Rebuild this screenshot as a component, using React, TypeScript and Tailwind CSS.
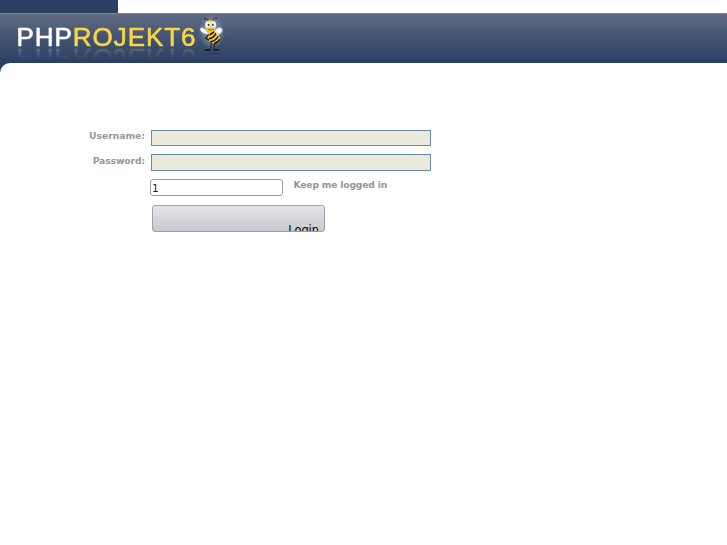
import React from "react";

const Bee = () => (
  <svg
    width="27"
    height="40"
    viewBox="0 0 30 38"
    preserveAspectRatio="none"
    className="-ml-[3px] mt-px shrink-0"
    aria-hidden="true"
  >
    <defs>
      <radialGradient id="glow">
        <stop offset="0.4" stopColor="#c5d0e0" stopOpacity="0.4" />
        <stop offset="1" stopColor="#c5d0e0" stopOpacity="0" />
      </radialGradient>
    </defs>
    <ellipse cx="15" cy="16" rx="15" ry="17" fill="url(#glow)" />
    {/* antennae */}
    <path
      d="M12 7Q11 2.5 7.5 3.5M16 7Q17 1.5 20.5 3"
      fill="none"
      stroke="#303641"
      strokeWidth="0.9"
    />
    <circle cx="7.5" cy="3.7" r="0.9" fill="#303641" />
    <circle cx="20.5" cy="3.2" r="0.9" fill="#303641" />
    {/* legs */}
    <path
      d="M15 26L14 33L9 33.5M18 26L18 33.2L22 33.2"
      fill="none"
      stroke="#20242c"
      strokeWidth="1.2"
    />
    <path
      d="M8 33.3h5M18 33h5"
      stroke="#181c24"
      strokeWidth="1.6"
      strokeLinecap="round"
    />
    {/* wings */}
    <path
      d="M12 18C7 18.5 2 16 2.5 13C3.5 10.5 9 13 12 18Z"
      fill="#f7f8fb"
      stroke="#b8c2d0"
      strokeWidth="0.5"
    />
    <path
      d="M18 18C18 13 24.5 10.5 26.8 13.5C28 17.5 22 19.5 18 18Z"
      fill="#f7f8fb"
      stroke="#b8c2d0"
      strokeWidth="0.5"
    />
    {/* body */}
    <path
      d="M11 16Q18 13 22.5 18Q26.5 24 22 27Q13 28 11 23Z"
      fill="#f4cd38"
    />
    <path
      d="M13 19L18 16M12 22.5Q17 22 20 17.5M13.5 25.5Q20 24.5 22.5 20M18 27Q22.5 26 24.2 23"
      fill="none"
      stroke="#181a1c"
      strokeWidth="1.6"
    />
    <path
      d="M12 18.5L8.5 22L12.5 24"
      fill="none"
      stroke="#22262c"
      strokeWidth="1.3"
    />
    {/* head */}
    <ellipse cx="14" cy="10.5" rx="6.2" ry="5.7" fill="#f2cb3b" />
    <ellipse cx="11" cy="9" rx="3" ry="3" fill="#eaf2fa" />
    <ellipse cx="17" cy="9" rx="3" ry="3" fill="#eaf2fa" />
    <circle cx="11.8" cy="9.4" r="1" fill="#26384f" />
    <circle cx="16.4" cy="9.4" r="1" fill="#26384f" />
    <path
      d="M10.8 13.3Q14 15.8 17.3 13.3"
      fill="none"
      stroke="#50401b"
      strokeWidth="0.8"
    />
    <path d="M10 36.5h11" stroke="#243653" strokeWidth="0.8" />
  </svg>
);

const labelStyle = "text-[9.2px] leading-3 font-bold text-[#969696]";

export default function App() {
  const [username, setUsername] = React.useState("");
  const [password, setPassword] = React.useState("");
  const [keep, setKeep] = React.useState("1");
  return (
    <div className="h-[545px] w-[727px] overflow-hidden bg-white font-['DejaVu_Sans',sans-serif]">
      <div className="h-[13px] w-[118px] bg-[#2b4063]" />
      <header className="flex h-[50px] items-start border-t border-[#79869a] bg-linear-to-b from-[#606b82] via-[#425472] via-50% to-[#293f65] pl-[16.5px]">
        <h1 className="mt-[8px] h-[30px] w-[184px] font-['Liberation_Sans',Arial,sans-serif] text-[26px] leading-[30px] tracking-[0.95px] whitespace-nowrap text-[#f9d544] [-webkit-box-reflect:below_-9px_linear-gradient(transparent_45%,rgba(0,0,0,0.3))] [-webkit-text-stroke:0.6px]">
          <span className="text-white">PHP</span>ROJEKT6
        </h1>
        <Bee />
      </header>
      <div className="bg-[#293f65]">
        <main className="h-[482px] rounded-tl-[10px] bg-white pt-[67px]">
          <form onSubmit={(e) => e.preventDefault()}>
            <div className="flex h-[24px] items-start">
              <label
                htmlFor="username"
                className={`${labelStyle} w-[145px] text-right`}
              >
                Username:
              </label>
              <input
                id="username"
                className="ml-[6px] h-[16px] w-[280px] border border-[#658cb2] bg-[#ebe9da] px-1 text-[10px] outline-none"
                value={username}
                onChange={(e) => setUsername(e.target.value)}
              />
            </div>
            <div className="flex h-[25px] items-start">
              <label
                htmlFor="password"
                className={`${labelStyle} w-[145px] pt-px text-right tracking-[-0.1px]`}
              >
                Password:
              </label>
              <input
                id="password"
                type="password"
                className="ml-[6px] h-[17px] w-[280px] border border-[#658cb2] bg-[#ebe9da] px-1 text-[10px] outline-none"
                value={password}
                onChange={(e) => setPassword(e.target.value)}
              />
            </div>
            <div className="flex h-[26px] items-start pl-[150px]">
              <input
                id="keep"
                className="h-[17px] w-[133px] rounded-[3px] border border-[#9c9c9c] bg-white px-px text-[10.5px] leading-[15px] text-[#222] outline-none"
                value={keep}
                onChange={(e) => setKeep(e.target.value)}
              />
              <label
                htmlFor="keep"
                className={`${labelStyle} ml-[10.5px] tracking-[-0.17px]`}
              >
                Keep me logged in
              </label>
            </div>
            <button
              type="submit"
              className="ml-[152px] block h-[27px] w-[173px] overflow-hidden rounded-[3px] border border-[#a0a0a3] bg-linear-to-b from-[#e4e5ea] to-[#c8cad0] pt-[17px] pr-[5px] text-right text-[11.4px] leading-[14px] text-black"
            >
              Login
            </button>
          </form>
        </main>
      </div>
    </div>
  );
}
